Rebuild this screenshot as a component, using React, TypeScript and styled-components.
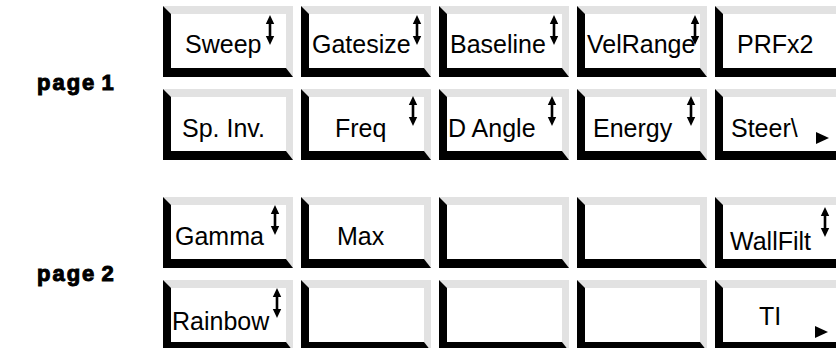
import React from 'react';
import styled, { createGlobalStyle } from 'styled-components';

const Global = createGlobalStyle`
  html, body { margin: 0; padding: 0; background: #fff; }
  body { font-family: "Liberation Sans", Arial, sans-serif; }
`;

const Page = styled.div`
  width: 836px;
  height: 348px;
  overflow: hidden;
  box-sizing: border-box;
  padding-top: 6px;
  display: flex;
  flex-direction: column;
  gap: 37px;
`;

const Group = styled.section`
  display: flex;
  align-items: center;
`;

const PageLabel = styled.div`
  flex: none;
  width: 163px;
  box-sizing: border-box;
  padding-left: 37px;
  font-size: 22px;
  font-weight: 700;
  letter-spacing: 2px;
  word-spacing: -3px;
  -webkit-text-stroke: 1px #000;
  color: #000;
`;

const Grid = styled.div`
  flex: none;
  display: grid;
  grid-template-columns: repeat(5, 130px);
  grid-auto-rows: 71px;
  column-gap: 8px;
  row-gap: 12px;
`;

const Key = styled.div`
  position: relative;
  box-sizing: border-box;
  border-style: solid;
  border-width: 8px 7px 9px 8px;
  border-color: #e2e2e2 #e2e2e2 #000 #000;
  background: #fff;
`;

const Label = styled.span<{ $x: number; $base: number }>`
  display: block;
  padding-left: ${(p) => p.$x}px;
  padding-top: ${(p) => p.$base - 21}px;
  font-size: 25px;
  line-height: 25px;
  white-space: nowrap;
  color: #000;
`;

const ArrowMark = styled.svg<{ $x: number; $y: number }>`
  position: absolute;
  left: ${(p) => p.$x - 5}px;
  top: ${(p) => p.$y}px;
  width: 10px;
  height: 30px;
`;

const PlayMark = styled.svg<{ $x: number; $y: number }>`
  position: absolute;
  left: ${(p) => p.$x}px;
  top: ${(p) => p.$y}px;
  width: 13px;
  height: 12px;
`;

type KeyDef = {
  text?: string;
  x?: number;
  base?: number;
  arrow?: number;
  arrowTop?: number;
  play?: [number, number];
};

const UpDown = ({ x, y }: { x: number; y: number }) => (
  <ArrowMark $x={x} $y={y} viewBox="0 0 10 30">
    <path d="M5 0 L0.8 9 L9.2 9 Z" fill="#000" />
    <rect x="3.7" y="8" width="2.6" height="14" fill="#000" />
    <path d="M0.8 21 L9.2 21 L5 30 Z" fill="#000" />
  </ArrowMark>
);

const Play = ({ x, y }: { x: number; y: number }) => (
  <PlayMark $x={x} $y={y} viewBox="0 0 13 12">
    <path d="M0 0 L13 6 L0 12 Z" fill="#000" />
  </PlayMark>
);

const SoftKey = ({ k }: { k: KeyDef }) => (
  <Key>
    {k.text && (
      <Label $x={k.x ?? 0} $base={k.base ?? 40}>
        {k.text}
      </Label>
    )}
    {k.arrow !== undefined && <UpDown x={k.arrow} y={k.arrowTop ?? 0} />}
    {k.play && <Play x={k.play[0]} y={k.play[1]} />}
  </Key>
);

const page1: KeyDef[] = [
  { text: 'Sweep', x: 14, base: 39, arrow: 99, arrowTop: 1 },
  { text: 'Gatesize', x: 3, base: 39, arrow: 108, arrowTop: 1 },
  { text: 'Baseline', x: 3, base: 39, arrow: 107, arrowTop: 1 },
  { text: 'VelRange', x: 2, base: 39, arrow: 110, arrowTop: 1 },
  { text: 'PRFx2', x: 14, base: 39 },
  { text: 'Sp. Inv.', x: 11, base: 40 },
  { text: 'Freq', x: 26, base: 40, arrow: 104, arrowTop: -1 },
  { text: 'D Angle', x: 1, base: 40, arrow: 105, arrowTop: -1 },
  { text: 'Energy', x: 8, base: 40, arrow: 106, arrowTop: -1 },
  { text: 'Steer\\', x: 8, base: 40, play: [93, 35] },
];

const page2: KeyDef[] = [
  { text: 'Gamma', x: 4, base: 40, arrow: 104, arrowTop: 0 },
  { text: 'Max', x: 28, base: 40 },
  {},
  {},
  { text: 'WallFilt', x: 7, base: 45, arrow: 102, arrowTop: 2 },
  { text: 'Rainbow', x: 1, base: 42, arrow: 106, arrowTop: 0 },
  {},
  {},
  {},
  { text: 'TI', x: 36, base: 37, play: [92, 38] },
];

export default function App() {
  return (
    <>
      <Global />
      <Page>
        <Group>
          <PageLabel>page 1</PageLabel>
          <Grid>
            {page1.map((k, i) => (
              <SoftKey key={i} k={k} />
            ))}
          </Grid>
        </Group>
        <Group>
          <PageLabel>page 2</PageLabel>
          <Grid>
            {page2.map((k, i) => (
              <SoftKey key={i} k={k} />
            ))}
          </Grid>
        </Group>
      </Page>
    </>
  );
}
